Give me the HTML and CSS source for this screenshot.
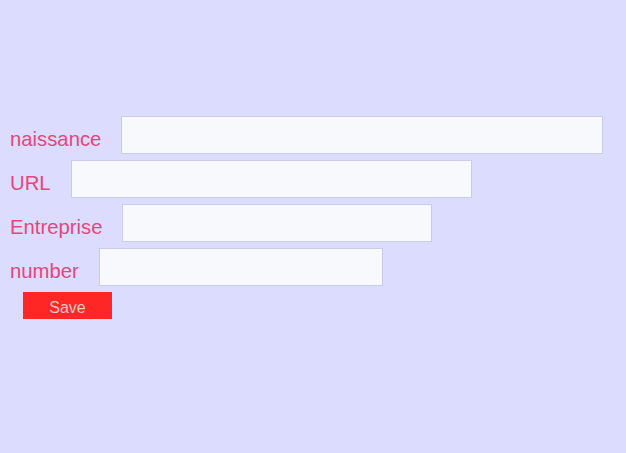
FILE: index.html
```html
<!DOCTYPE html>
<html>
<head>
<meta charset="utf-8">
<link rel="stylesheet" href="styles.css">
</head>
<body>
<form class="form">
  <div class="row"><label class="label">naissance</label><input class="field w1" type="text"></div>
  <div class="row"><label class="label">URL</label><input class="field w2" type="text"></div>
  <div class="row"><label class="label">Entreprise</label><input class="field w3" type="text"></div>
  <div class="row"><label class="label">number</label><input class="field w4" type="text"></div>
  <button class="save" type="button">Save</button>
</form>
</body>
</html>
```
FILE: styles.css
```css
html, body {
  margin: 0;
  padding: 0;
  background: #dcdcff;
  height: 100%;
}
.form {
  display: flex;
  flex-direction: column;
  align-items: flex-start;
  padding: 116px 0 0 10px;
  gap: 6px;
  font-family: "Liberation Sans", Arial, sans-serif;
}
.row {
  display: flex;
  align-items: center;
  gap: 20px;
}
.label {
  color: #e8467a;
  font-size: 20.3px;
  line-height: 24px;
  padding-top: 7px;
}
.field {
  box-sizing: border-box;
  height: 38px;
  margin: 0;
  border: 1px solid #c9cbe8;
  background: #f8f9fd;
  outline: none;
}
.w1 { width: 482px; }
.w2 { width: 401px; }
.w3 { width: 310px; }
.w4 { width: 284px; }
.save {
  margin: 0 0 0 13px;
  width: 89px;
  height: 27px;
  border: none;
  background: #ff2626;
  color: #f7c6c6;
  font-family: "Liberation Sans", Arial, sans-serif;
  font-size: 16px;
  padding: 5px 0 0;
}
```
